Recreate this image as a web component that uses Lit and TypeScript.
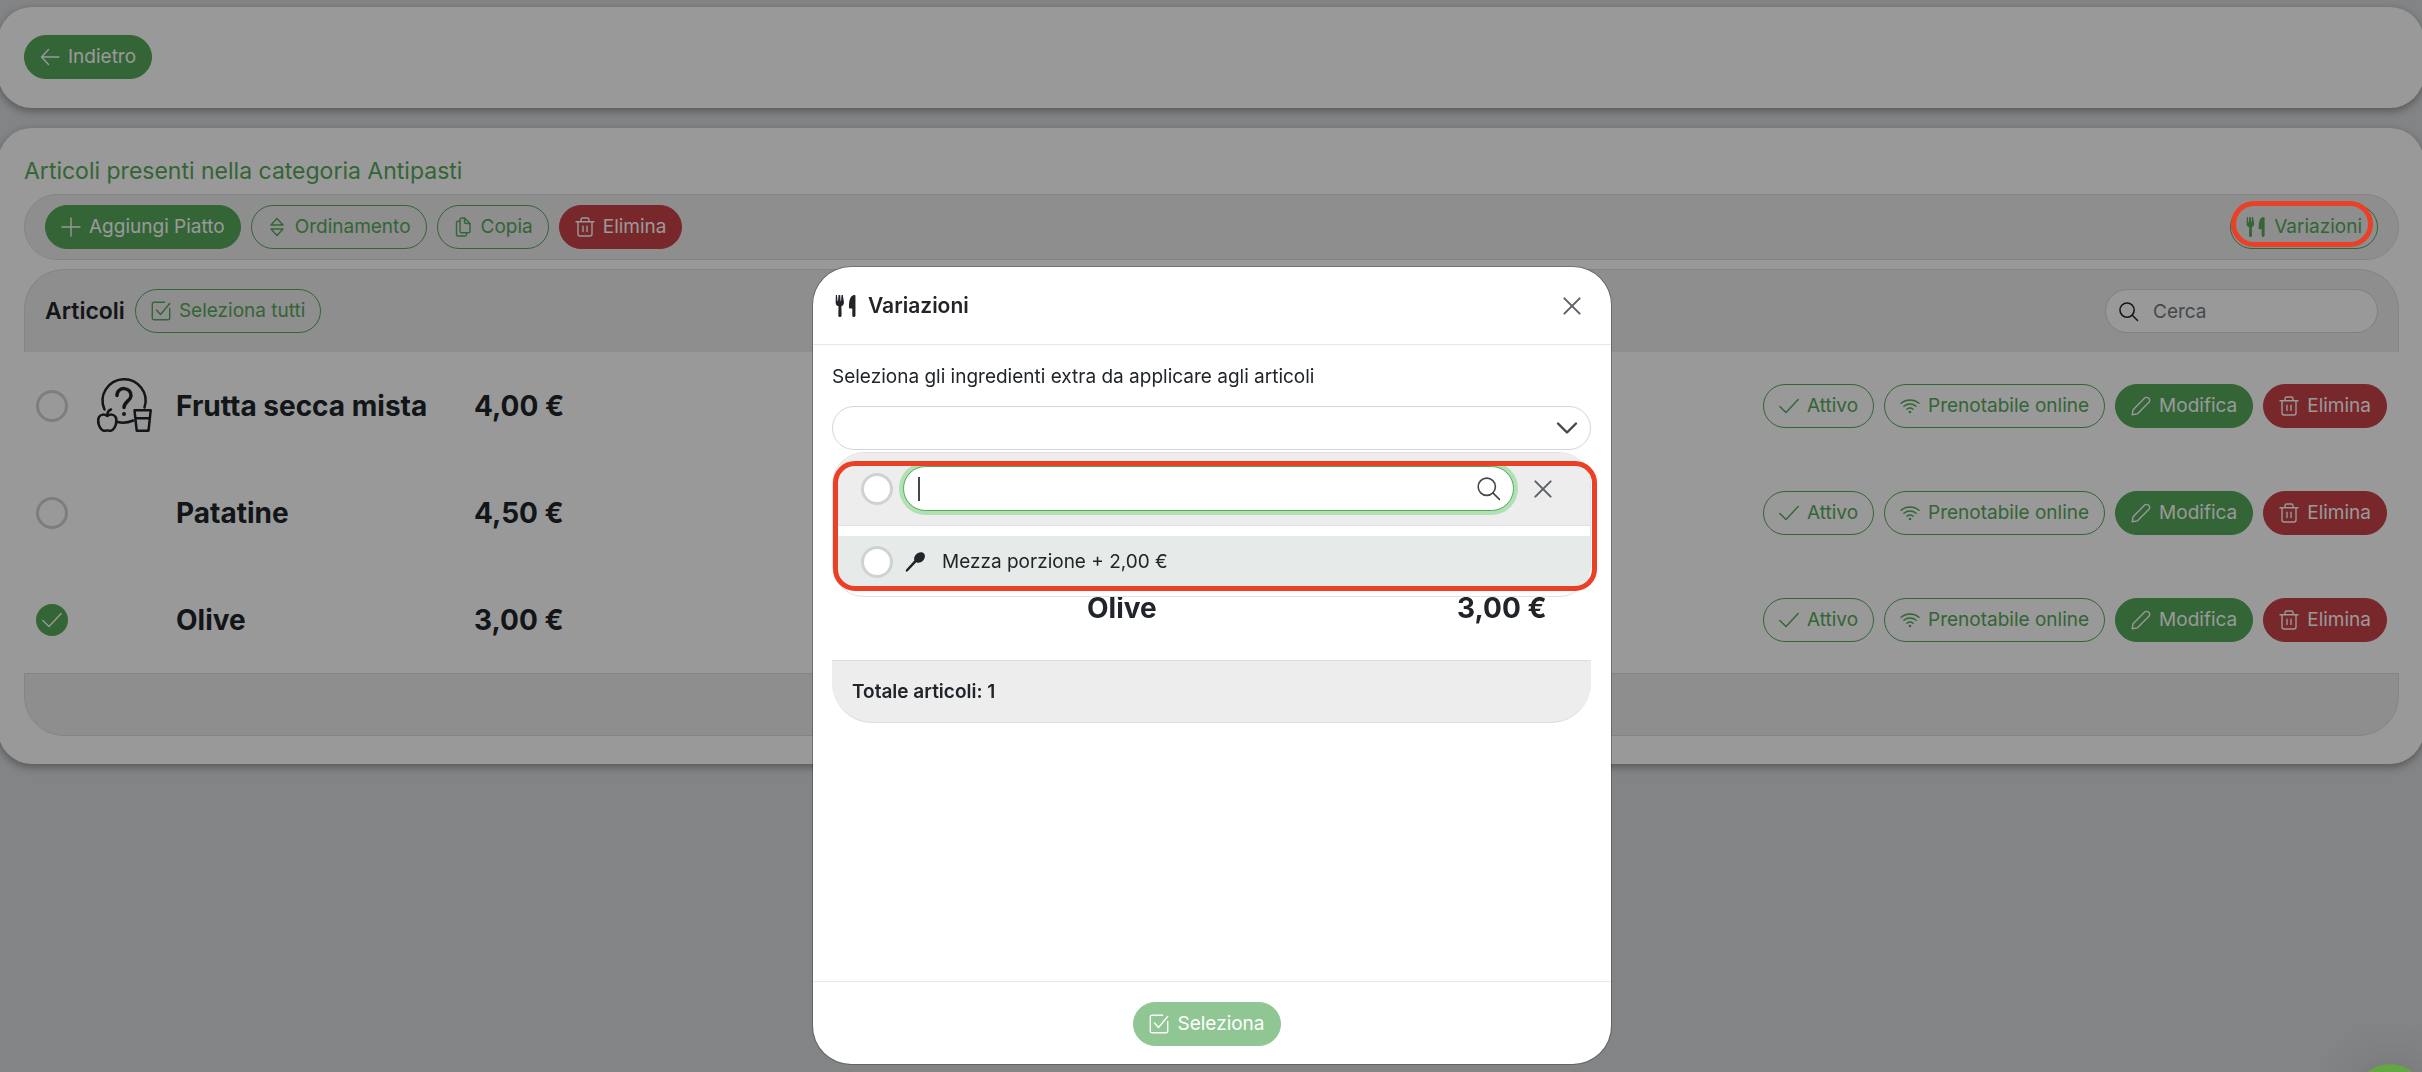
import { LitElement, html, svg, css, nothing, type TemplateResult } from "lit";
import { customElement, property } from "lit/decorators.js";

/* Glyphs drawn on a 20 × 20 grid; strokes inherit the text colour. */
const GLYPHS: Record<string, TemplateResult> = {
  back: svg`<path d="M19 10H1.5M8.5 2.5 1.5 10l7 7.5"/>`,
  plus: svg`<path d="M10 1v18M1 10h18"/>`,
  sort: svg`<path d="M4 8l6-6.5L16 8zM4 12l6 6.5 6-6.5z"/>`,
  copy: svg`<path d="M11.500 1H8.600A1.600 1.600 0 0 0 7 2.600v11.600a1.600 1.600 0 0 0 1.600 1.600h6.800a1.600 1.600 0 0 0 1.600-1.600V6.500zM11.500 1v4a1.500 1.500 0 0 0 1.500 1.500h4"/><path d="M7 4.200H5.100a1.600 1.600 0 0 0-1.600 1.600v11.600A1.600 1.600 0 0 0 5.100 19h6.800a1.600 1.600 0 0 0 1.600-1.600v-1.600"/>`,
  trash: svg`<path d="M1 4.700h18M6 4.700V2.700A1.700 1.700 0 0 1 7.700 1h4.600A1.700 1.700 0 0 1 14 2.700v2M3 4.700V17a2 2 0 0 0 2 2h10a2 2 0 0 0 2-2V4.700M8 9.300v5.200M12 9.300v5.200"/>`,
  check: svg`<path d="M.8 10.500 7 16.500 19.200 3.500"/>`,
  wifi: svg`<path d="M1 7.300c5.200-4.400 12.800-4.400 18 0M3.900 10.300c3.600-3 8.600-3 12.200 0M6.900 13.200c1.900-1.500 4.300-1.500 6.200 0"/><circle class="solid" cx="10" cy="16" r="1.300"/>`,
  pencil: svg`<path d="M1.200 18.800l.9-5.100L13.700 2.100a2.600 2.600 0 0 1 3.700 0l.5.500a2.600 2.600 0 0 1 0 3.700L6.300 17.900z"/>`,
  square: svg`<path d="M13.500 1.300H3a1.700 1.700 0 0 0-1.700 1.700v14A1.700 1.700 0 0 0 3 18.700h14a1.700 1.700 0 0 0 1.700-1.700V7.500M5.500 9l4 4.500L18.700 2.500"/>`,
  search: svg`<circle cx="8.500" cy="8.500" r="7.500"/><path d="M14 14l5.500 5.500"/>`,
  close: svg`<path d="M1.500 1.500l17 17M18.500 1.500l-17 17"/>`,
  down: svg`<path d="M1 5.500l9 9 9-9"/>`,
  cutlery: svg`<path class="solid" d="M.8 0h1l.5 5.500h.5L3.200 0h1.500l.4 5.500h.4L5.900 0h1.200l1 6.300c.2 2-.8 3.400-2.300 4l.2 8.300a1.500 1.500 0 0 1-3 0l.2-8.300C1.400 9.700.4 8.300.6 6.300zM18.600.6v18a1.400 1.400 0 0 1-2.900 0V12.200h-2.200a.8.800 0 0 1-.8-.8C12.500 5.500 13.800 0 17.800 0a.7.700 0 0 1 .8.600z"/>`,
  spoon: svg`<path class="solid" d="M19 1.600c1.700 1.900 1 5-1 7.200-2 2-4.700 2.500-6.700 1.400L2.700 19.300c-1.200 1.100-2.700-.3-1.700-1.600L9.300 8.600C8.600 6.500 9.400 4.100 11.200 2.300 13.500 0 17.200-.4 19 1.600z"/>`,
};

const glyph = (name: string) =>
  html`<svg class="glyph ${name}" viewBox="0 0 20 20" aria-hidden="true">${GLYPHS[name]}</svg>`;

const shared = css`
  * { box-sizing: border-box; }
  :host {
    --green: #55a85a;
    --red: #c84347;
    --ink: #212529;
    --panel: #ededee;
    --line: #dcdddf;
    --mark: #ea4025;
  }
  button, input, select { font: inherit; color: inherit; margin: 0; }
  button { cursor: pointer; }
  .glyph {
    display: block; flex: none; width: 20px; height: 20px; overflow: visible;
    fill: none; stroke: currentColor; stroke-width: 1.4;
    stroke-linecap: round; stroke-linejoin: round;
  }
  .glyph .solid { fill: currentColor; stroke: none; }
`;

@customElement("pill-button")
class PillButton extends LitElement {
  @property() icon = "";
  @property() label = "";
  @property() tone: "outline" | "green" | "red" = "outline";
  @property({ type: Boolean }) disabled = false;

  static styles = [shared, css`
    :host { display: block; flex: none; }
    .pill {
      display: flex; align-items: center; gap: 8px; height: 44px; padding: 0 15px;
      border: 1px solid var(--green); border-radius: 22px; background: none;
      color: var(--green); white-space: nowrap;
    }
    .green { background: var(--green); color: #fff; }
    .red { background: var(--red); border-color: var(--red); color: #fff; }
    .pill:disabled { opacity: 0.65; }
  `];

  render() {
    return html`<button type="button" class="pill ${this.tone}" ?disabled=${this.disabled}>
      ${glyph(this.icon)}<span>${this.label}</span>
    </button>`;
  }
}

@customElement("round-check")
class RoundCheck extends LitElement {
  @property() label = "";
  @property({ type: Boolean }) checked = false;

  static styles = [shared, css`
    :host { display: block; flex: none; width: 32px; }
    .wrap { display: grid; place-items: center; color: #fff; }
    .wrap > * { grid-area: 1 / 1; }
    .box {
      appearance: none; width: 32px; height: 32px; border-radius: 50%;
      border: 3px solid #ced2d4; background: #fff;
    }
    .box:checked { background: var(--green); border-color: var(--green); }
    .glyph { pointer-events: none; }
  `];

  render() {
    return html`<label class="wrap">
      <input class="box" type="checkbox" aria-label=${this.label} .checked=${this.checked} />
      ${this.checked ? glyph("check") : nothing}
    </label>`;
  }
}

interface Dish { name: string; price: string; picture?: boolean; selected?: boolean; }

const DISHES: Dish[] = [
  { name: "Frutta secca mista", price: "4,00 €", picture: true },
  { name: "Patatine", price: "4,50 €" },
  { name: "Olive", price: "3,00 €", selected: true },
];

@customElement("dish-table")
class DishTable extends LitElement {
  static styles = [shared, css`
    :host { display: block; }
    .dishes { width: 100%; border-collapse: collapse; table-layout: fixed; }
    .c-pick { width: 64px; }
    .c-pic { width: 88px; }
    .c-name { width: 298px; }
    .c-act { width: 660px; }
    td { height: 107px; padding: 0; vertical-align: middle; text-align: left; }
    .pick { padding-left: 12px; }
    .pic { padding-left: 9px; }
    .name, .price { font-size: 28px; font-weight: 700; color: var(--ink); }
    .act { padding-right: 12px; }
    .row { display: flex; justify-content: flex-end; gap: 10px; }
    .food {
      display: block; width: 54px; height: 54px; fill: none; stroke: var(--ink);
      stroke-width: 2.5; stroke-linecap: round; stroke-linejoin: round; overflow: visible;
    }
  `];

  private picture() {
    return html`<svg class="food" viewBox="0 0 54 54" role="img" aria-label="Piatto">
      <path d="M7.500 30.500A21.500 21.500 0 1 1 47.500 28.500M20.700 43q7.500 1.800 15.600-1.500"/>
      <path stroke-width="3.500" d="M20 16.500c0-9.500 14.500-9 14 .5-.3 5-7 5.500-7 11.500"/>
      <circle cx="27" cy="35" r="2" fill="currentColor" stroke="none"/>
      <path d="M10.300 37c-3-2.200-6.500-1.800-8.300 1-2.200 4 .2 12 4.300 13.600 1.500.5 2.500-.2 4-.2s2.500.7 4 .2c4.100-1.600 6.500-9.600 4.300-13.600-1.800-2.800-5.300-3.200-8.300-1zM10.300 36.500c0-3 1.200-5.200 3.700-6"/>
      <path d="M37.500 31.300h16.200l-2.200 20.400H39.700zM38.300 39.300h14.500"/>
    </svg>`;
  }

  render() {
    return html`<table class="dishes">
      <colgroup>
        <col class="c-pick" /><col class="c-pic" /><col class="c-name" /><col /><col class="c-act" />
      </colgroup>
      <tbody>
        ${DISHES.map((d) => html`<tr>
          <td class="pick"><round-check label=${d.name} ?checked=${!!d.selected}></round-check></td>
          <td class="pic">${d.picture ? this.picture() : nothing}</td>
          <td class="name">${d.name}</td>
          <td class="price">${d.price}</td>
          <td class="act"><div class="row">
            <pill-button icon="check" label="Attivo"></pill-button>
            <pill-button icon="wifi" label="Prenotabile online"></pill-button>
            <pill-button icon="pencil" label="Modifica" tone="green"></pill-button>
            <pill-button icon="trash" label="Elimina" tone="red"></pill-button>
          </div></td>
        </tr>`)}
      </tbody>
    </table>`;
  }
}

@customElement("variation-dialog")
class VariationDialog extends LitElement {
  static styles = [shared, css`
    :host { display: flex; flex-direction: column; }
    .dialog {
      flex: 1; display: flex; flex-direction: column; background: #fff; color: var(--ink);
      border-radius: 38px; box-shadow: 0 0 0 1px rgba(0, 0, 0, 0.25);
    }
    .head {
      display: flex; align-items: center; gap: 11px; height: 78px; padding: 0 30px 0 22px;
      border-bottom: 1px solid #e6e8ea;
    }
    .head .cutlery { width: 22px; height: 22px; }
    .title { margin: 0; font-size: 21px; font-weight: 600; line-height: 30px; flex: 1; }
    .icon-button { padding: 0; border: 0; background: none; color: #5c6267; flex: none; }
    .icon-button .glyph { width: 18px; height: 18px; stroke-width: 2.2; }
    .body { flex: 1; padding: 17px 20px 0 19px; }
    .hint { display: block; line-height: 30px; margin-bottom: 14px; }

    .picker { position: relative; }
    .field { display: grid; align-items: center; }
    .field > * { grid-area: 1 / 1; }
    .select {
      appearance: none; width: 100%; height: 44px; padding: 0 48px 0 16px;
      border: 1px solid #d3d6da; border-radius: 22px; background: #fff;
    }
    .field .down { justify-self: end; margin-right: 14px; stroke-width: 2.4; color: #43484c; pointer-events: none; }

    .menu {
      position: absolute; z-index: 2; top: 46px; left: 0; right: 0; background: #fff;
      border: 1px solid #e0e1e3; border-radius: 32px; overflow: hidden;
    }
    .menu-head {
      display: flex; align-items: center; gap: 10px; padding: 13px 38px 14px 28px;
      background: var(--panel); border-bottom: 1px solid #dfe0e1;
    }
    .query-field { flex: 1; display: grid; align-items: center; margin-right: 10px; }
    .query-field > * { grid-area: 1 / 1; }
    .query {
      width: 100%; height: 45px; padding: 0 50px 0 16px; border: 1px solid var(--green);
      border-radius: 23px; background: #fff; outline: none; box-shadow: 0 0 0 4px #b0e0b4;
    }
    .caret { width: 2px; height: 24px; margin-left: 15px; background: #43484c; }
    .query-field .search { justify-self: end; width: 23px; height: 23px; margin-right: 14px; color: #43484c; }
    .options { list-style: none; margin: 0; padding: 10px 0; }
    .option {
      display: flex; align-items: center; height: 50px; padding: 1px 0 0 28px; background: #e6ebea;
    }
    .option .spoon { margin: 0 17px 0 12px; }
    .mark {
      position: absolute; z-index: 3; top: 55px; left: 1px; right: -6px; height: 130px;
      border: 5px solid var(--mark); border-radius: 22px; pointer-events: none;
    }

    .summary { width: 100%; border-collapse: separate; border-spacing: 0; table-layout: fixed; margin-top: 22px; }
    .summary th, .summary td { padding: 0; text-align: left; }
    .summary-head { height: 83px; background: var(--panel); border-radius: 40px 40px 0 0; }
    .summary .name, .summary .price { height: 105px; font-size: 28px; font-weight: 700; }
    .summary .name { padding-left: 255px; }
    .c-price { width: 134px; }
    .summary .total {
      height: 63px; padding-left: 20px; background: var(--panel); font-weight: 600;
      border: 1px solid var(--line); border-width: 1px 0; border-radius: 0 0 40px 40px;
    }
    .foot {
      display: flex; justify-content: center; padding: 20px 10px 18px 0;
      border-top: 1px solid #e6e8ea;
    }
  `];

  render() {
    return html`<section class="dialog" role="dialog" aria-labelledby="title">
      <header class="head">
        ${glyph("cutlery")}
        <h2 class="title" id="title">Variazioni</h2>
        <button class="icon-button" type="button" aria-label="Chiudi">${glyph("close")}</button>
      </header>
      <div class="body">
        <label class="hint" for="extra">Seleziona gli ingredienti extra da applicare agli articoli</label>
        <div class="picker">
          <div class="field">
            <select class="select" id="extra"><option></option></select>
            ${glyph("down")}
          </div>
          <div class="menu">
            <div class="menu-head">
              <round-check label="Tutti"></round-check>
              <div class="query-field">
                <input class="query" type="text" aria-label="Filtra" />
                <span class="caret"></span>
                ${glyph("search")}
              </div>
              <button class="icon-button" type="button" aria-label="Svuota">${glyph("close")}</button>
            </div>
            <ul class="options">
              <li class="option">
                <round-check label="Mezza porzione"></round-check>
                ${glyph("spoon")}<span>Mezza porzione + 2,00 €</span>
              </li>
            </ul>
          </div>
          <div class="mark"></div>
        </div>
        <table class="summary">
          <colgroup><col /><col class="c-price" /></colgroup>
          <thead><tr><th class="summary-head" colspan="2"></th></tr></thead>
          <tbody><tr><td class="name">Olive</td><td class="price">3,00 €</td></tr></tbody>
          <tfoot><tr><td class="total" colspan="2">Totale articoli: 1</td></tr></tfoot>
        </table>
      </div>
      <footer class="foot">
        <pill-button icon="square" label="Seleziona" tone="green" disabled></pill-button>
      </footer>
    </section>`;
  }
}

@customElement("app-root")
class AppRoot extends LitElement {
  static styles = [shared, css`
    :host {
      display: block; font-family: Inter, "Liberation Sans", sans-serif;
      font-size: 19px; line-height: 28px; color: var(--ink);
    }
    .page { min-height: 100vh; background: #dadcde; overflow: hidden; padding-top: 7px; }
    .card {
      margin: 0 -2px 20px; padding: 27px 25px 28px 26px; background: #fff; border-radius: 34px;
      box-shadow: 0 3px 8px rgba(0, 0, 0, 0.35);
    }
    .topbar { display: flex; align-items: center; height: 101px; }
    .heading { margin: 0 0 7px; font-size: 23px; font-weight: 400; line-height: 32px; color: var(--green); }
    .toolbar {
      display: flex; gap: 10px; padding: 10px 20px; background: var(--panel);
      border: 1px solid var(--line); border-radius: 33px;
    }
    .last { position: relative; margin-left: auto; }
    .mark {
      position: absolute; z-index: 20; top: -4px; left: 1px; right: 5px; height: 46px;
      border: 5px solid var(--mark); border-radius: 23px; pointer-events: none;
    }
    .list-head {
      display: flex; align-items: center; gap: 10px; margin-top: 9px; padding: 19px 20px;
      background: var(--panel); border: 1px solid var(--line); border-bottom: 0;
      border-radius: 40px 40px 0 0;
    }
    .list-title { margin: 0; font-size: 23px; font-weight: 600; }
    .search-field { display: grid; align-items: center; width: 273px; margin-left: auto; }
    .search-field > * { grid-area: 1 / 1; }
    .search-input {
      width: 100%; height: 44px; padding: 0 16px 0 47px; border: 1px solid #d2d5d8;
      border-radius: 22px; background: #fff;
    }
    .search-input::placeholder { color: #74797e; opacity: 1; }
    .search-field .glyph { width: 19px; height: 19px; margin-left: 14px; pointer-events: none; stroke-width: 1.6; }
    .list-foot {
      height: 63px; background: var(--panel); border: 1px solid var(--line);
      border-radius: 0 0 40px 40px;
    }
    .backdrop {
      position: fixed; inset: 0; z-index: 10; background: rgba(0, 0, 0, 0.4);
    }
    .stage {
      position: fixed; inset: 0; z-index: 30; display: grid; justify-content: center;
      grid-template-columns: minmax(0, 798px); padding: 267px 0 8px 2px;
      pointer-events: none;
    }
    .stage > * { pointer-events: auto; }
    .chat {
      position: fixed; z-index: 40; right: -2px; bottom: -60px; width: 68px; height: 68px;
      padding: 0; border: 0; border-radius: 50%; background: #62a744;
      box-shadow: 0 0 40px rgba(60, 60, 70, 0.25);
    }
  `];

  render() {
    return html`
      <main class="page">
        <nav class="card topbar">
          <pill-button icon="back" label="Indietro" tone="green"></pill-button>
        </nav>
        <section class="card">
          <h1 class="heading">Articoli presenti nella categoria Antipasti</h1>
          <div class="toolbar">
            <pill-button icon="plus" label="Aggiungi Piatto" tone="green"></pill-button>
            <pill-button icon="sort" label="Ordinamento"></pill-button>
            <pill-button icon="copy" label="Copia"></pill-button>
            <pill-button icon="trash" label="Elimina" tone="red"></pill-button>
            <div class="last">
              <pill-button icon="cutlery" label="Variazioni"></pill-button>
              <div class="mark"></div>
            </div>
          </div>
          <div class="list-head">
            <h2 class="list-title">Articoli</h2>
            <pill-button icon="square" label="Seleziona tutti"></pill-button>
            <div class="search-field">
              <input class="search-input" type="search" placeholder="Cerca" aria-label="Cerca" />
              ${glyph("search")}
            </div>
          </div>
          <dish-table></dish-table>
          <div class="list-foot"></div>
        </section>
      </main>
      <div class="backdrop"></div>
      <div class="stage"><variation-dialog></variation-dialog></div>
      <button class="chat" type="button" aria-label="Chat"></button>
    `;
  }
}
